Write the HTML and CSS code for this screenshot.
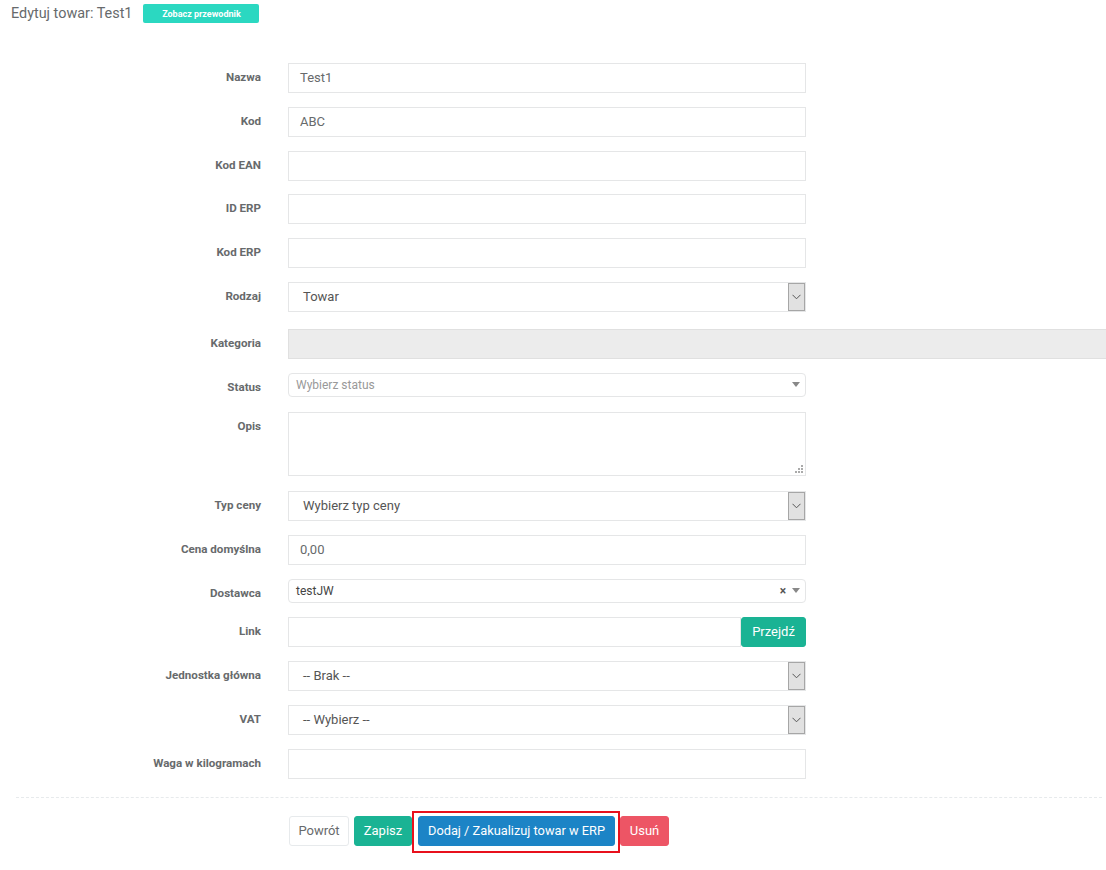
FILE: index.html
```html
<!DOCTYPE html>
<html lang="pl">
<head>
<meta charset="utf-8">
<title>Edytuj towar</title>
<link rel="stylesheet" href="styles.css">
</head>
<body>
<div class="page">
  <div class="header">
    <h2 class="title">Edytuj towar: Test1</h2>
    <span class="guide-btn">Zobacz przewodnik</span>
  </div>

  <form class="form">
    <div class="row tight"><label class="lbl">Nazwa</label><div class="ctl"><div class="input">Test1</div></div></div>
    <div class="row tight"><label class="lbl">Kod</label><div class="ctl"><div class="input">ABC</div></div></div>
    <div class="row tight"><label class="lbl">Kod EAN</label><div class="ctl"><div class="input"></div></div></div>
    <div class="row tight"><label class="lbl">ID ERP</label><div class="ctl"><div class="input"></div></div></div>
    <div class="row tight"><label class="lbl">Kod ERP</label><div class="ctl"><div class="input"></div></div></div>
    <div class="row row-rodzaj"><label class="lbl">Rodzaj</label><div class="ctl"><div class="select"><span class="sel-text">Towar</span><span class="sel-arrow"><svg width="9" height="6" viewBox="0 0 9 6"><path d="M0.5 0.8 L4.5 4.8 L8.5 0.8" fill="none" stroke="#555" stroke-width="1"/></svg></span></div></div></div>
    <div class="row"><label class="lbl">Kategoria</label><div class="ctl"><div class="input disabled"></div></div></div>
    <div class="row row-status"><label class="lbl">Status</label><div class="ctl"><div class="s2"><span class="s2-ph">Wybierz status</span><span class="s2-icons"><span class="tri"></span></span></div></div></div>
    <div class="row row-opis"><label class="lbl">Opis</label><div class="ctl"><div class="textarea"><svg class="grip" width="8" height="8" viewBox="0 0 8 8"><g fill="#aaa"><rect x="6" y="0" width="2" height="2"/><rect x="3" y="3" width="2" height="2"/><rect x="6" y="3" width="2" height="2"/><rect x="0" y="6" width="2" height="2"/><rect x="3" y="6" width="2" height="2"/><rect x="6" y="6" width="2" height="2"/></g></svg></div></div></div>
    <div class="row"><label class="lbl">Typ ceny</label><div class="ctl"><div class="select"><span class="sel-text">Wybierz typ ceny</span><span class="sel-arrow"><svg width="9" height="6" viewBox="0 0 9 6"><path d="M0.5 0.8 L4.5 4.8 L8.5 0.8" fill="none" stroke="#555" stroke-width="1"/></svg></span></div></div></div>
    <div class="row"><label class="lbl">Cena domyślna</label><div class="ctl"><div class="input">0,00</div></div></div>
    <div class="row"><label class="lbl">Dostawca</label><div class="ctl"><div class="s2"><span class="s2-val">testJW</span><span class="s2-icons"><span class="clear">×</span><span class="tri"></span></span></div></div></div>
    <div class="row"><label class="lbl">Link</label><div class="ctl"><div class="group"><div class="input grow"></div><span class="btn btn-green addon">Przejdź</span></div></div></div>
    <div class="row"><label class="lbl">Jednostka główna</label><div class="ctl"><div class="select"><span class="sel-text">-- Brak --</span><span class="sel-arrow"><svg width="9" height="6" viewBox="0 0 9 6"><path d="M0.5 0.8 L4.5 4.8 L8.5 0.8" fill="none" stroke="#555" stroke-width="1"/></svg></span></div></div></div>
    <div class="row"><label class="lbl">VAT</label><div class="ctl"><div class="select"><span class="sel-text">-- Wybierz --</span><span class="sel-arrow"><svg width="9" height="6" viewBox="0 0 9 6"><path d="M0.5 0.8 L4.5 4.8 L8.5 0.8" fill="none" stroke="#555" stroke-width="1"/></svg></span></div></div></div>
    <div class="row row-last"><label class="lbl">Waga w kilogramach</label><div class="ctl"><div class="input"></div></div></div>

    <div class="divider"></div>

    <div class="actions">
      <span class="btn btn-white">Powrót</span>
      <span class="btn btn-green">Zapisz</span>
      <span class="btn btn-blue highlighted">Dodaj / Zakualizuj towar w ERP</span>
      <span class="btn btn-red">Usuń</span>
    </div>
  </form>
</div>
</body>
</html>
```

FILE: styles.css
```css
* { box-sizing: border-box; }
html, body { margin: 0; padding: 0; background: #fff; overflow: hidden; }
body {
  font-family: Roboto, "Open Sans", "Liberation Sans", sans-serif;
  color: #676a6c;
  width: 1106px;
  height: 870px;
}
.page { padding: 4px 0 0 0; }

.header {
  display: flex;
  align-items: center;
  height: 19px;
}
.title {
  margin: 0 0 0 11px;
  font-size: 14.4px;
  font-weight: 400;
  color: #676a6c;
  line-height: 19px;
}
.guide-btn {
  margin-left: 11px;
  width: 116px;
  height: 19px;
  background: #2bd8c1;
  color: #fff;
  border-radius: 2px;
  font-size: 9px;
  font-weight: 700;
  display: flex;
  align-items: center;
  justify-content: center;
}

.form { margin-top: 40px; }
.row {
  display: grid;
  grid-template-columns: 261px 1fr;
  column-gap: 27px;
  margin-bottom: 14px;
}
.row.tight { margin-bottom: 13.8px; }
.row-rodzaj { margin-bottom: 17px; }
.row-status { margin-bottom: 15px; }
.row-opis { margin-bottom: 15px; }
.row-last { margin-bottom: 18px; }
.lbl {
  text-align: right;
  font-size: 11.6px;
  font-weight: 700;
  color: #676a6c;
  padding-top: 7px;
  line-height: 14px;
}
.ctl { width: 518px; }

.input {
  height: 30px;
  border: 1px solid #e5e6e7;
  background: #fff;
  font-size: 13px;
  color: #676a6c;
  padding: 0 11px;
  line-height: 28px;
}
.input.disabled {
  width: 830px;
  background: #ececec;
  border-color: #e0e0e0;
}
.select {
  height: 30px;
  border: 1px solid #e5e6e7;
  display: flex;
  align-items: center;
  justify-content: space-between;
  padding-left: 14px;
  font-size: 13px;
  color: #555;
}
.sel-arrow {
  width: 17px;
  height: 28px;
  background: #e1e1e1;
  border: 1px solid #a6a6a6;
  display: flex;
  align-items: center;
  justify-content: center;
}

.s2 {
  height: 24px;
  border: 1px solid #e5e6e7;
  border-radius: 4px;
  display: flex;
  align-items: center;
  justify-content: space-between;
  padding-left: 7px;
  padding-right: 5px;
  font-size: 12px;
}
.s2-ph { color: #999; }
.s2-val { color: #444; }
.s2-icons { display: flex; align-items: center; gap: 6px; }
.clear { font-size: 12px; font-weight: 700; color: #555; line-height: 1; }
.tri {
  width: 0; height: 0;
  border-left: 4px solid transparent;
  border-right: 4px solid transparent;
  border-top: 5px solid #888;
}

.textarea {
  height: 64px;
  border: 1px solid #e5e6e7;
  position: relative;
}
.grip { position: absolute; right: 2px; bottom: 2px; }

.group { display: flex; height: 30px; }
.grow { flex: 1; }
.addon { height: 30px; border-radius: 0 3px 3px 0; width: 65px; padding: 0; }

.btn {
  display: inline-flex;
  align-items: center;
  justify-content: center;
  height: 30px;
  padding: 0 12px;
  font-size: 13px;
  border-radius: 3px;
  color: #fff;
  border: 1px solid transparent;
}
.btn-green { background: #1ab394; border-color: #1ab394; }
.btn-blue { background: #1c84c6; border-color: #1c84c6; }
.btn-red { background: #ed5565; border-color: #ed5565; }
.btn-white { background: #fff; color: #676a6c; border-color: #e7eaec; }

.divider {
  margin: 0 4px 0 16px;
  border-top: 1px dashed #e7eaec;
}
.actions {
  display: flex;
  align-items: center;
  margin-top: 18px;
  padding-left: 289px;
  gap: 5px;
}
.actions .btn-white { width: 60px; padding: 0; }
.actions .btn-green { width: 58px; padding: 0; }
.highlighted {
  position: relative;
  width: 197px;
  padding: 0;
  margin-left: 1px;
  font-size: 12.8px;
}
.highlighted::after {
  content: "";
  position: absolute;
  left: -7px;
  right: -6px;
  top: -6px;
  bottom: -8px;
  border: 2px solid #e8101c;
}
.actions .btn-red { width: 49px; padding: 0; }
```
